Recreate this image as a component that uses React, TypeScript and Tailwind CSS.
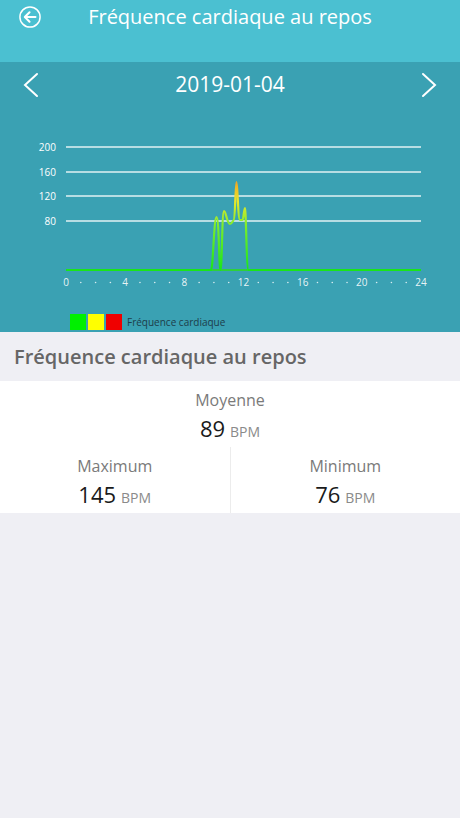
import React from 'react';

const FONT = { fontFamily: '"Open Sans", "Noto Sans", sans-serif' };

// chart geometry, in svg coords (svg top = page y 108)
const X0 = 66;
const X1 = 421;
const HOUR = (X1 - X0) / 24;
const BASE = 162;
const GRID = [
    { v: 200, y: 39 },
    { v: 160, y: 64 },
    { v: 120, y: 88 },
    { v: 80, y: 113 },
];

const LINE =
    'M66,162 L211,162 C213,162 214,109 216.5,109 C219,109 219,162 220.5,162 ' +
    'C222,162 222,103 224,103 C226,103 227,116 230,116 C232,116 233,112 234,112 ' +
    'C235,112 235.5,74 236.5,74 C237.5,74 238,112 240,112 L242.5,112 ' +
    'C243.5,112 244,100 245,100 C246,100 246.5,162 248.5,162 L421,162';

function HeartChart() {
    const hours = Array.from({ length: 25 }, (_, i) => i);
    return (
        <svg width="460" height="192" viewBox="0 0 460 192" className="block">
            <defs>
                <linearGradient id="hr" x1="0" y1="162" x2="0" y2="74" gradientUnits="userSpaceOnUse">
                    <stop offset="0" stopColor="#19e619" />
                    <stop offset="0.5" stopColor="#7ced2c" />
                    <stop offset="0.78" stopColor="#e8e82c" />
                    <stop offset="1" stopColor="#f2a623" />
                </linearGradient>
            </defs>

            {/* grid */}
            {GRID.map(g => (
                <g key={g.v}>
                    <line x1={X0} x2={X1} y1={g.y} y2={g.y} stroke="#ffffff" strokeOpacity="0.85" strokeWidth="1.4" />
                    <text x="56" y={g.y + 3.5} textAnchor="end" fontSize="10" fill="#ffffff" style={FONT}>
                        {g.v}
                    </text>
                </g>
            ))}

            {/* baseline + data */}
            <line x1={X0} x2={X1} y1={BASE} y2={BASE} stroke="#2ed13a" strokeWidth="1.8" />
            <path d={LINE} fill="none" stroke="url(#hr)" strokeWidth="2.2" strokeLinejoin="round" />

            {/* x axis */}
            {hours.map(h =>
                h % 4 === 0 ? (
                    <text
                        key={h}
                        x={X0 + h * HOUR}
                        y="178"
                        textAnchor="middle"
                        fontSize="10"
                        fill="#ffffff"
                        fillOpacity="0.9"
                        style={FONT}
                    >
                        {h}
                    </text>
                ) : (
                    <circle key={h} cx={X0 + h * HOUR} cy="174.5" r="0.8" fill="#ffffff" fillOpacity="0.8" />
                )
            )}
        </svg>
    );
}

function Stat({ label, value }: { label: string; value: number }) {
    return (
        <div className="flex flex-col items-center justify-center pt-[3px]">
            <div className="text-[16px] leading-none text-[#7a7a7a]">{label}</div>
            <div className="mt-[9px] flex items-baseline gap-[5px] leading-none">
                <span className="text-[22px] text-[#1a1a1a]">{value}</span>
                <span className="text-[14px] text-[#8a8a8a]">BPM</span>
            </div>
        </div>
    );
}

export default function App() {
    return (
        <main className="min-h-[818px] w-[460px] bg-[#efeff4]" style={FONT}>
            {/* Header */}
            <header className="h-[62px] bg-[#4bc0d1] relative">
                <div className="flex h-[34px] items-center justify-center text-[20px] text-white">
                    Fréquence cardiaque au repos
                </div>
                <button className="absolute left-[19px] top-[6px] h-[22px] w-[22px]">
                    <svg viewBox="0 0 24 24" className="h-[22px] w-[22px]" fill="none" stroke="#ffffff">
                        <circle cx="12" cy="12" r="11" strokeWidth="1.6" />
                        <path d="M18 12H6.5M11.5 6.8L6.3 12l5.2 5.2" strokeWidth="2.2" strokeLinecap="round" strokeLinejoin="round" />
                    </svg>
                </button>
            </header>

            {/* Chart panel */}
            <section className="bg-[#3aa1b3] pb-[2px]">
                <div className="flex h-[46px] items-center justify-between px-[22px] text-white">
                    <svg width="18" height="26" viewBox="0 0 18 26" fill="none" stroke="#ffffff" strokeWidth="2" strokeLinecap="round">
                        <path d="M15 2L3 13l12 11" />
                    </svg>
                    <span className="text-[21px]">2019-01-04</span>
                    <svg width="18" height="26" viewBox="0 0 18 26" fill="none" stroke="#ffffff" strokeWidth="2" strokeLinecap="round">
                        <path d="M3 2l12 11L3 24" />
                    </svg>
                </div>
                <HeartChart />
                <div className="mt-[14px] flex h-[16px] items-center pl-[70px]">
                    <span className="h-[16px] w-[16px] bg-[#00f000]" />
                    <span className="ml-[2px] h-[16px] w-[16px] bg-[#ffff00]" />
                    <span className="ml-[2px] h-[16px] w-[16px] bg-[#f00000]" />
                    <span className="ml-[5px] text-[10px] text-[#1d3d4a]">Fréquence cardiaque</span>
                </div>
            </section>

            {/* Summary */}
            <div className="flex h-[49px] items-center px-[14px] text-[20px] font-semibold text-[#666666]">
                Fréquence cardiaque au repos
            </div>
            <div className="bg-white">
                <div className="flex h-[65px] items-center justify-center">
                    <Stat label="Moyenne" value={89} />
                </div>
                <div className="mt-px grid h-[66px] grid-cols-2 bg-[#ececec] gap-px">
                    <div className="flex items-center justify-center bg-white">
                        <Stat label="Maximum" value={145} />
                    </div>
                    <div className="flex items-center justify-center bg-white">
                        <Stat label="Minimum" value={76} />
                    </div>
                </div>
            </div>
        </main>
    );
}
